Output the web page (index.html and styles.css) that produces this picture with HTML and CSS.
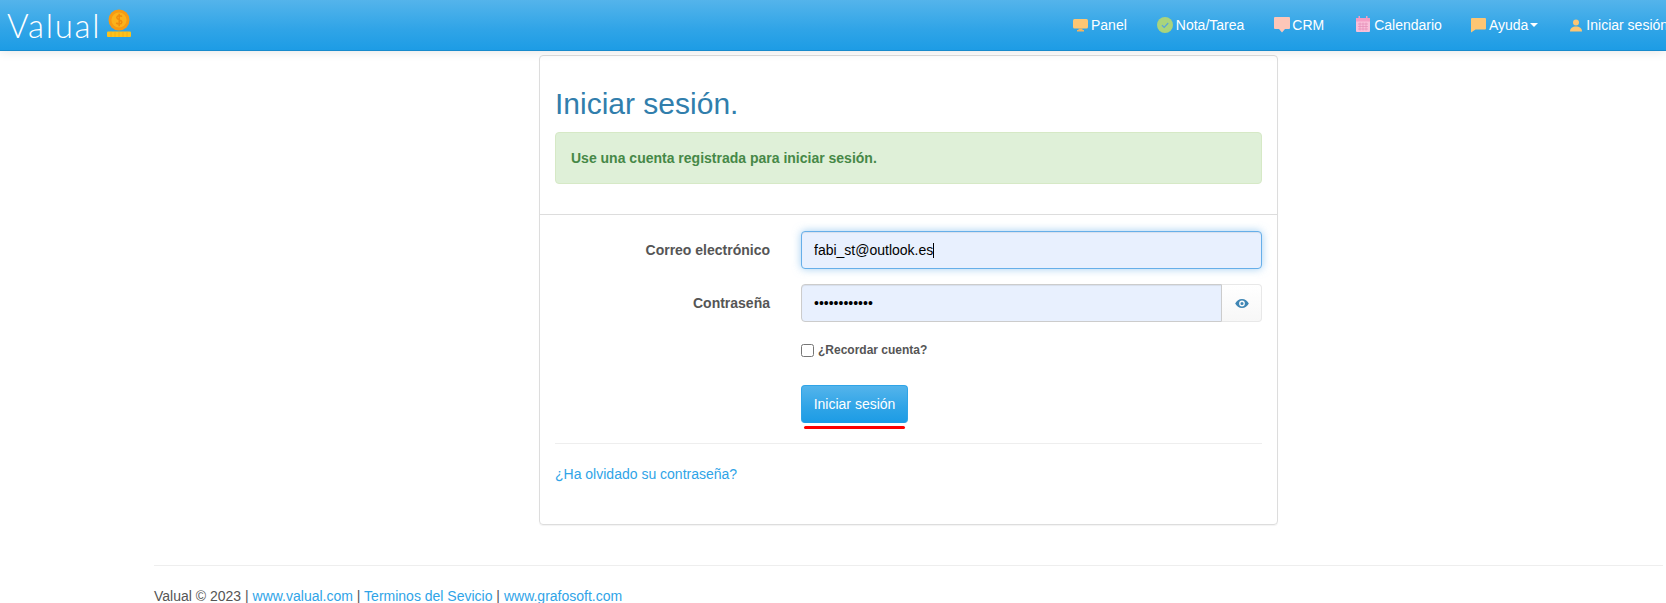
FILE: index.html
```html
<!DOCTYPE html>
<html lang="es">
<head>
<meta charset="utf-8">
<title>Iniciar sesión - Valual</title>
<link rel="stylesheet" href="styles.css">
</head>
<body>
<header class="navbar">
  <a class="brand" href="#">
    <span class="brand-name">Valual</span>
    <svg class="brand-coin" viewBox="0 0 26 30" width="26" height="30" aria-hidden="true">
      <circle cx="13" cy="12" r="10.500" fill="#f79a13"/>
      <circle cx="13" cy="12" r="7.600" fill="#fbb21c"/>
      <path d="M16 8.600c-.8-1-4.800-1.600-5.200.8-.4 2.600 5.400 2 5 4.900-.3 2.200-4.300 1.900-5.600.6M13.200 5.800v12.400" fill="none" stroke="#f08c0e" stroke-width="1.500"/>
      <rect x="1" y="23.500" width="24" height="5.500" rx="1" fill="#fcc21b"/>
      <path d="M5 23.500v5.500M9 23.500v5.500M13 23.500v5.500M17 23.500v5.500M21 23.500v5.500" stroke="#f5a81a" stroke-width=".8"/>
    </svg>
  </a>
  <nav class="menu">
    <a class="menu-item" href="#">
      <svg class="icon" viewBox="0 0 15 13" width="15" height="13" aria-hidden="true"><rect x="0" y="0" width="15" height="9.500" rx="1.500" fill="#fdc673"/><path d="M5.500 9.500h4V11H11v1.500H4V11h1.500z" fill="#f5b45e"/></svg>
      <span>Panel</span>
    </a>
    <a class="menu-item" href="#">
      <svg class="icon" viewBox="0 0 16 16" width="16" height="16" aria-hidden="true"><circle cx="8" cy="8" r="8" fill="#a9d47c"/><path d="M5 8.200l2.200 2.200L11.200 6" fill="none" stroke="#5aa5d8" stroke-width="1.300"/></svg>
      <span>Nota/Tarea</span>
    </a>
    <a class="menu-item menu-item-crm" href="#">
      <svg class="icon" viewBox="0 0 16 16" width="16" height="16" aria-hidden="true"><path d="M1 0h14a1 1 0 0 1 1 1v10a1 1 0 0 1-1 1h-4l-3 3.500L5 12H1a1 1 0 0 1-1-1V1a1 1 0 0 1 1-1z" fill="#fdc6b8"/></svg>
      <span>CRM</span>
    </a>
    <a class="menu-item menu-item-cal" href="#">
      <svg class="icon icon-cal" viewBox="0 0 16 16" width="16" height="16" aria-hidden="true"><rect x="1" y="2" width="14" height="14" rx="1" fill="#f9bfd9"/><rect x="1" y="2" width="14" height="3.500" fill="#f59dc4"/><rect x="3.500" y="0" width="1.500" height="3.500" fill="#f59dc4"/><rect x="11" y="0" width="1.500" height="3.500" fill="#f59dc4"/><path d="M3 8h10M3 10.500h10M3 13h10M5 6.500v8M8 6.500v8M11 6.500v8" stroke="#e58db7" stroke-width=".7"/></svg>
      <span>Calendario</span>
    </a>
    <a class="menu-item" href="#">
      <svg class="icon" viewBox="0 0 15 15" width="15" height="15" aria-hidden="true"><path d="M1 0h13a1 1 0 0 1 1 1v9.500a1 1 0 0 1-1 1H4.500L0 14.500V1a1 1 0 0 1 1-1z" fill="#fdc673"/></svg>
      <span class="menu-label">Ayuda<i class="caret-down"></i></span>
    </a>
    <a class="menu-item" href="#">
      <svg class="icon icon-user" viewBox="0 0 12 13" width="12" height="13" aria-hidden="true"><circle cx="6" cy="3.500" r="3" fill="#fdc673"/><path d="M0 12.500C0 9 2.500 7.500 6 7.500s6 1.500 6 5z" fill="#fdc673"/></svg>
      <span>Iniciar sesión</span>
    </a>
  </nav>
</header>

<main class="page">
  <section class="card">
    <div class="card-head">
      <h2 class="title">Iniciar sesión.</h2>
      <div class="alert">Use una cuenta registrada para iniciar sesión.</div>
    </div>
    <hr class="rule-strong">
    <form class="form">
      <div class="row">
        <label class="row-label" for="email">Correo electrónico</label>
        <div class="control">
          <input class="input input-focus" id="email" type="text" value="fabi_st@outlook.es">
          <span class="text-caret"></span>
        </div>
      </div>
      <div class="row">
        <label class="row-label" for="pass">Contraseña</label>
        <div class="control input-group">
          <input class="input input-joined" id="pass" type="password" value="abcdefghijkl">
          <span class="addon">
            <svg viewBox="0 0 16 12" width="14" height="11" aria-hidden="true"><path fill-rule="evenodd" d="M8 .8C4.600.8 1.800 3 .2 6c1.600 3 4.400 5.200 7.800 5.200S14.200 9 15.800 6C14.200 3 11.400.8 8 .8zm0 1.900a3.300 3.300 0 1 1 0 6.600 3.300 3.300 0 0 1 0-6.600zm0 1.500a1.800 1.800 0 1 0 0 3.600 1.800 1.800 0 0 0 0-3.600z" fill="#3f86b4"/></svg>
          </span>
        </div>
      </div>
      <div class="row row-check">
        <span class="row-label"></span>
        <label class="check"><input type="checkbox"><span>¿Recordar cuenta?</span></label>
      </div>
      <div class="row row-submit">
        <span class="row-label"></span>
        <div class="submit-wrap">
          <button class="btn" type="button">Iniciar sesión</button>
          <span class="underline"></span>
        </div>
      </div>
    </form>
    <hr class="rule-soft">
    <a class="forgot" href="#">¿Ha olvidado su contraseña?</a>
  </section>

  <footer class="footer">
    <hr class="footer-rule">
    <p class="footer-text">Valual © 2023 | <a href="#">www.valual.com</a> | <a href="#">Terminos del Sevicio</a> | <a href="#">www.grafosoft.com</a></p>
  </footer>
</main>
</body>
</html>
```
FILE: styles.css
```css
* { box-sizing: border-box; }
html, body { margin: 0; height: 100%; overflow: hidden; background: #fff; }
body { font-family: "Liberation Sans", Arial, sans-serif; font-size: 14px; line-height: 20px; color: #555; }
a { color: #2fa4e7; text-decoration: none; }

.navbar {
  display: flex; align-items: flex-start; width: 1666px; height: 51px; overflow: hidden;
  background: linear-gradient(#54b4eb, #2fa4e7 60%, #1d9ce5);
  border-bottom: 1px solid #178acc;
  box-shadow: 0 1px 10px rgba(0,0,0,.1);
  position: relative;
}
.brand { display: flex; align-items: flex-start; flex: 0 0 1058px; padding: 7px 0 0 7px; color: #fff; }
.brand-name { flex: 0 0 99px; font-family: Lato, sans-serif; font-weight: 300; font-size: 33px; line-height: 36px; letter-spacing: 1.700px; }
.brand-coin { margin: 1px 0 0; }
.menu { display: flex; flex: none; }
.menu-item { display: flex; align-items: center; gap: 3px; height: 50px; padding: 0 15px; color: #fff; white-space: nowrap; }
.menu-item-crm { gap: 2px; padding-right: 16px; }
.menu-item-cal { padding-right: 14px; }
.icon { flex: none; }
.icon-cal { margin-top: -2px; }
.icon-user { margin: 0 1px 0 2px; }
.menu-label { display: flex; align-items: center; }
.caret-down { display: inline-block; margin-left: 2px; border-top: 4px solid #fff; border-left: 4px solid transparent; border-right: 4px solid transparent; }

.page { padding-left: 154px; padding-right: 3px; }
.card {
  width: 739px; margin: 4px auto 0; height: 470px; padding: 0 15px;
  border: 1px solid #ddd; border-radius: 4px; box-shadow: 0 1px 1px rgba(0,0,0,.05);
}
.card-head { padding-top: 1px; }
.title { margin: 30px 0 12px; font-size: 30px; line-height: 33px; font-weight: 400; color: #317eac; }
.alert {
  height: 52px; padding: 15px;
  background: #dff0d8; border: 1px solid #d6e9c6; border-radius: 4px;
  color: #468847; font-weight: 700; font-size: 14px;
}
.rule-strong { height: 1px; margin: 30px -15px 16px; border: 0; background: #ddd; }
.rule-soft { height: 1px; margin: 14px 0 0; border: 0; background: #eee; }

.form { display: flex; flex-direction: column; }
.row { display: flex; align-items: center; gap: 31px; margin-bottom: 15px; }
.row-label { flex: 0 0 215px; text-align: right; font-weight: 700; font-size: 14px; }
.control { position: relative; flex: 1; height: 38px; }
.input {
  display: block; width: 100%; height: 38px; padding: 8px 12px; outline: 0;
  font: 14px/20px "Liberation Sans", Arial, sans-serif; color: #000;
  background: #e8f0fe; border: 1px solid #ccc; border-radius: 4px;
  box-shadow: inset 0 1px 1px rgba(0,0,0,.075);
}
.input-focus { border-color: #66afe9; box-shadow: inset 0 1px 1px rgba(0,0,0,.075), 0 0 8px rgba(102,175,233,.6); }
.text-caret { position: absolute; left: 132px; top: 12px; width: 1px; height: 15px; background: #000; }
.input-group { display: flex; }
.input-joined { flex: 1; min-width: 0; border-radius: 4px 0 0 4px; }
.addon {
  display: flex; align-items: center; justify-content: center; flex: 0 0 40px; padding-left: 1px;
  border: 1px solid #e8e8e8; border-left: 0; border-radius: 0 4px 4px 0;
  background: linear-gradient(#fff, #f7f7f7);
}
.row-check { margin: -1px 0 0; }
.check { display: flex; align-items: center; gap: 4px; height: 28px; font-size: 12px; font-weight: 700; }
.check input { margin: 0; width: 13px; height: 13px; }
.row-submit { margin: 21px 0 0; align-items: flex-start; }
.submit-wrap { display: flex; flex-direction: column; align-items: flex-start; }
.btn {
  width: 107px; height: 38px; padding: 0; color: #fff; cursor: pointer;
  font: 14px/20px "Liberation Sans", Arial, sans-serif;
  background: linear-gradient(#54b4eb, #2fa4e7 60%, #1d9ce5);
  border: 1px solid #2fa4e7; border-bottom-color: #1d9ce5; border-radius: 4px;
}
.underline { display: block; width: 101px; height: 3px; margin: 3px 0 0 3px; background: #f00; border-radius: 2px; }
.forgot { display: block; margin-top: 20px; }

.footer { margin-top: 40px; }
.footer-rule { height: 1px; margin: 0 0 20px; border: 0; background: #eee; }
.footer-text { margin: 0; }
```
